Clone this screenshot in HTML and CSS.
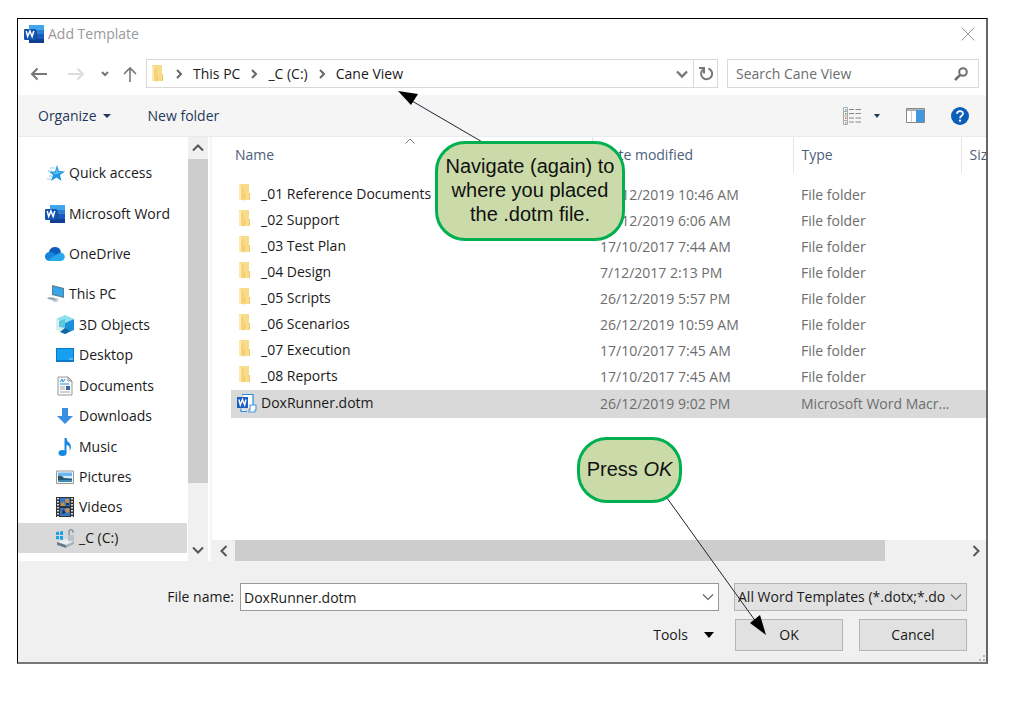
FILE: index.html
```
<!DOCTYPE html>
<html lang="en">
<head>
<meta charset="utf-8">
<title>Add Template</title>
<link rel="stylesheet" href="styles.css">
</head>
<body>
<svg class="sprite" aria-hidden="true">
  <symbol id="word" viewBox="0 0 20 20">
    <path fill="#41a5ee" d="M5 1h15v5H5z"/><path fill="#2b7cd3" d="M5 6h15v4H5z"/><path fill="#185abd" d="M5 10h15v5H5z"/><path fill="#103f91" d="M5 15h15v4H5z"/>
    <path fill="#0b2f73" d="M4 6h9v10H4z" opacity=".5"/><rect y="5" width="12" height="11" rx="1" fill="#1453b0"/>
    <path d="M2.200 7l1.500 5.500 2.200-5.500 2.200 5.500 1.700-5.500" fill="none" stroke="#fff" stroke-width="1.500"/>
  </symbol>
  <symbol id="folder" viewBox="0 0 12 18">
    <path fill="#f9dc8b" d="M1 0h10v16H1z"/><path fill="#fdebb0" d="M1 1h2v15H1z"/><path fill="#f2c75f" d="M11 9h1v7h-1z"/><path fill="#f6d27a" d="M3 2l3 2v13l-3-2z"/><path fill="#f0c664" d="M6 10h1v4l-1 2z"/>
  </symbol>
  <symbol id="right" viewBox="0 0 10 10"><path d="M3 1l4 4-4 4" fill="none" stroke="currentColor" stroke-width="2"/></symbol>
  <symbol id="down" viewBox="0 0 12 12"><path d="M1 3.500l5 5 5-5" fill="none" stroke="currentColor" stroke-width="2"/></symbol>
  <symbol id="thin-down" viewBox="0 0 12 12"><path d="M1 3.500l5 5 5-5" fill="none" stroke="currentColor" stroke-width="1.200"/></symbol>
  <symbol id="up" viewBox="0 0 12 12"><path d="M1 8.500l5-5 5 5" fill="none" stroke="currentColor" stroke-width="2"/></symbol>
</svg>

<main class="dialog">
  <header class="titlebar">
    <svg class="icon20"><use href="#word"/></svg>
    <h1>Add Template</h1>
    <button class="close" aria-label="Close"><svg width="14" height="14" viewBox="0 0 14 14"><path d="M.5.500l13 13M13.500.500l-13 13" stroke="#999" fill="none"/></svg></button>
  </header>

  <nav class="navbar">
    <div class="history">
      <button aria-label="Back"><svg width="18" height="14" viewBox="0 0 18 14"><path d="M17 7H2M7.500 1.500L2 7l5.500 5.500" fill="none" stroke="#777" stroke-width="2"/></svg></button>
      <button aria-label="Forward"><svg width="18" height="14" viewBox="0 0 18 14"><path d="M1 7h15M10.500 1.500L16 7l-5.500 5.500" fill="none" stroke="#ddd" stroke-width="2"/></svg></button>
      <button aria-label="Recent locations"><svg class="chev8" viewBox="0 0 8 8"><path d="M1 2l3 3 3-3" fill="none" stroke="#777" stroke-width="2"/></svg></button>
      <button aria-label="Up"><svg width="14" height="16" viewBox="0 0 14 16"><path d="M7 16V2M1 8l6-6 6 6" fill="none" stroke="#777" stroke-width="1.600"/></svg></button>
    </div>
    <div class="address">
      <svg class="folder"><use href="#folder"/></svg>
      <svg class="sep"><use href="#right"/></svg>
      <button>This PC</button>
      <svg class="sep"><use href="#right"/></svg>
      <button>_C (C:)</button>
      <svg class="sep"><use href="#right"/></svg>
      <button>Cane View</button>
      <button class="drop" aria-label="Previous locations"><svg width="12" height="12" viewBox="0 0 12 12"><path d="M1 3.500l5 5 5-5" fill="none" stroke="#777" stroke-width="2.400"/></svg></button>
      <button class="refresh" aria-label="Refresh"><svg width="14" height="15" viewBox="0 0 14 15"><path d="M9.500 2.500a5.500 5.500 0 1 1-5.500 1" fill="none" stroke="#777" stroke-width="2"/><path d="M0 2h5v5.500" fill="none" stroke="#777" stroke-width="2"/></svg></button>
    </div>
    <div class="search">
      <input type="search" placeholder="Search Cane View" aria-label="Search Cane View">
      <svg width="14" height="14" viewBox="0 0 14 14"><circle cx="9" cy="5" r="3.800" fill="none" stroke="#707070" stroke-width="2"/><path d="M6.200 7.800L1 13" stroke="#707070" stroke-width="2.600"/></svg>
    </div>
  </nav>

  <div class="toolbar">
    <button>Organize <svg width="8" height="4" viewBox="0 0 8 4"><path d="M0 0h8L4 4z" fill="#1e395b"/></svg></button>
    <button>New folder</button>
    <div class="views">
      <button class="view-mode" aria-label="Change your view">
        <svg width="18" height="18" viewBox="0 0 18 18"><path d="M.5.500h4v17h-4zM.5 4.500h4M.5 9h4M.5 13.500h4" fill="#fff" stroke="#aaa"/><path d="M6 2.500h5M12.500 2.500H18M6 6.500h5M12.500 6.500H18M6 11h5M12.500 11H18M6 15h5M12.500 15H18" stroke="#888"/><path fill="#4b9fdb" d="M2 2h1.500v1.500H2z"/><path fill="#5a8a5a" d="M2 6h1.500v1.500H2z"/><path fill="#e06a2a" d="M2 10.500h1.500V12H2z"/><path fill="#8a8a9a" d="M2 15h1.500v1.500H2z"/></svg>
        <svg width="6" height="4" viewBox="0 0 6 4"><path d="M0 0h6L3 4z" fill="#1e395b"/></svg>
      </button>
      <button aria-label="Preview pane"><svg width="19" height="15" viewBox="0 0 19 15"><path d="M.5.500h18v14H.5z" fill="#fff" stroke="#888"/><path d="M1 1h17v2H1z" fill="#aab4bc"/><path d="M5.500 3v11" stroke="#ccc"/><path d="M10 2h8v12h-8z" fill="#3f97e0"/></svg></button>
      <button aria-label="Help"><svg width="18" height="18" viewBox="0 0 18 18"><circle cx="9" cy="9" r="9" fill="#0c5fb8"/><path d="M6 6.800C6 3.300 12 3.200 12 6.600 12 8.800 9 8.700 9 11.200" fill="none" stroke="#fff" stroke-width="1.700"/><circle cx="9" cy="13.700" r="1.100" fill="#fff"/></svg></button>
    </div>
  </div>

  <div class="browser">
    <ul class="places">
      <li class="root"><svg viewBox="0 0 20 20"><path fill="#2196e3" d="M12 2l2 6 6 .5-5 3.500 1.500 6-5-3.500L6 18l2-6-4-3.500h6z"/><path fill="#5cc0f5" d="M12 4l1 5 4 .5-7 2-3-2h4z"/><path d="M5 5h5M3 8h4M4 13h3M2 16h4" stroke="#8ccdf2"/></svg>Quick access</li>
      <li class="root"><svg><use href="#word"/></svg>Microsoft Word</li>
      <li class="root"><svg viewBox="0 0 20 20"><path fill="#0f5db8" d="M4 9a6 5.500 0 0 1 12-1l-3 5z"/><path fill="#1684dc" d="M4 17a4.500 4.500 0 0 1 1-9q3-.5 5 2l5 6z"/><path fill="#28a8ea" d="M3 16.500q3-3.500 8-5.500l4-2.500a4.200 4.200 0 0 1 1 8.500H4z"/></svg>OneDrive</li>
      <li><svg viewBox="0 0 20 20"><path fill="#5b7f97" d="M7 1l12 3v10L7 11z"/><path fill="#37a5e8" d="M8 2.500l10 2.500v7.500L8 10z"/><path fill="#b9c5cc" d="M1 14l6-1 7 2-5 2zM8 17l4-1 2 1-4 1z"/><path d="M3 14l7 1.500" stroke="#7e8e98"/></svg>This PC</li>
      <li class="sub"><svg viewBox="0 0 20 20"><path fill="#8fe0ef" d="M1 4l9-4 9 4-9 4z"/><path fill="#d5f1ee" d="M1 4l9 4v11l-9-4z"/><path fill="#1d8ed8" d="M10 8l9-4v11l-9 4z"/><path fill="#5dc6df" d="M4 6l6-2v9l-6-1z"/><path fill="#13669f" d="M10 13l5 3-5 3-5-2z"/></svg>3D Objects</li>
      <li class="sub"><svg viewBox="0 0 20 20"><path fill="#0b78c9" d="M1 3h18v14H1z"/><path fill="#18a0f0" d="M2 4h16v11H2z"/><path fill="#58b9ee" d="M14 13h4v2h-4z"/></svg>Desktop</li>
      <li class="sub"><svg viewBox="0 0 20 20"><path fill="#fafafa" stroke="#999" d="M3 1h10l4 4v14H3z"/><path fill="#ccc" stroke="#999" d="M13 1v4h4z"/><path d="M5 6l2-3 1 3 2-3M5 8h9" stroke="#2492dc" fill="none"/><path d="M5 11h5M5 13h5M5 16h10" stroke="#aaa"/><path fill="#346d9d" d="M11 10h4v4h-4z"/></svg>Documents</li>
      <li class="sub"><svg viewBox="0 0 20 20"><path fill="#3b8de0" d="M7 2h6v8h5l-8 8-8-8h5z"/></svg>Downloads</li>
      <li class="sub"><svg viewBox="0 0 20 20"><ellipse cx="7.500" cy="16" rx="4" ry="3" fill="#1689e0"/><path fill="#1689e0" d="M9.500 1h2q0 3 3 5 3 4 0 8 1-6-3-6v8h-2z"/></svg>Music</li>
      <li class="sub"><svg viewBox="0 0 20 20"><path fill="#f6f6f6" stroke="#999" d="M1.500 4h17v12.500h-17z"/><path fill="#6bb7ed" d="M3 5.500h14v9.500H3z"/><path fill="#d6ecf7" d="M3 9h14v2H3z"/><path fill="#28586b" d="M3 9q4-1 6 2l8 1v1H3z"/><path fill="#4489b3" d="M3 13h14v2H3z"/></svg>Pictures</li>
      <li class="sub"><svg viewBox="0 0 20 20"><path fill="#333" d="M1 0h18v20H1z"/><path fill="#3378c8" d="M5 1h10v18H5z"/><path d="M3 1v19M17 1v19" stroke="#ddd" stroke-width="2" stroke-dasharray="1.500 1.500"/><path fill="#d48a3c" d="M10 2h4v4l-3 1zM6 6l3-1 1 4-4 1zM10 12l4-1v4l-3 1z"/><path fill="#27313f" d="M5 9h10v2H5zM8 12l3 4-4 1zM11 6h3v2h-3z"/></svg>Videos</li>
      <li class="sub selected"><svg viewBox="0 0 20 20"><path fill="#1ba1e8" d="M1 4l3-.5v3.500H1zM5 3.500L8 3v4H5zM1 8h3v3.500L1 11zM5 8h3v4l-3-.5z"/><path fill="#e8eef2" d="M2 14l9-3 8 2-8 4z"/><path fill="#6d7a83" d="M2 14l9 3v3l-9-3z"/><path fill="#a8b4bc" d="M11 17l8-4v3l-8 4z"/><path fill="#b9c2c8" d="M13 7h6v6h-6z"/><path d="M14 7V3q2-3 4 0v2" fill="none" stroke="#8c979e" stroke-width="1.500"/></svg>_C (C:)</li>
    </ul>
    <div class="vscroll">
      <button aria-label="Scroll up"><svg class="chev12"><use href="#up"/></svg></button>
      <div class="vthumb"></div>
      <button aria-label="Scroll down"><svg class="chev12"><use href="#down"/></svg></button>
    </div>
    <section class="files">
      <table>
        <colgroup><col><col class="c-date"><col class="c-type"><col class="c-size"></colgroup>
        <thead><tr><th>Name<svg class="sort" viewBox="0 0 10 6"><path d="M.5 5.500L5 1l4.500 4.500" fill="none" stroke="#777"/></svg></th><th>Date modified</th><th>Type</th><th>Size</th></tr></thead>
        <tbody>
          <tr><td><svg class="folder"><use href="#folder"/></svg>_01 Reference Documents</td><td>26/12/2019 10:46 AM</td><td>File folder</td><td></td></tr>
          <tr><td><svg class="folder"><use href="#folder"/></svg>_02 Support</td><td>26/12/2019 6:06 AM</td><td>File folder</td><td></td></tr>
          <tr><td><svg class="folder"><use href="#folder"/></svg>_03 Test Plan</td><td>17/10/2017 7:44 AM</td><td>File folder</td><td></td></tr>
          <tr><td><svg class="folder"><use href="#folder"/></svg>_04 Design</td><td>7/12/2017 2:13 PM</td><td>File folder</td><td></td></tr>
          <tr><td><svg class="folder"><use href="#folder"/></svg>_05 Scripts</td><td>26/12/2019 5:57 PM</td><td>File folder</td><td></td></tr>
          <tr><td><svg class="folder"><use href="#folder"/></svg>_06 Scenarios</td><td>26/12/2019 10:59 AM</td><td>File folder</td><td></td></tr>
          <tr><td><svg class="folder"><use href="#folder"/></svg>_07 Execution</td><td>17/10/2017 7:45 AM</td><td>File folder</td><td></td></tr>
          <tr><td><svg class="folder"><use href="#folder"/></svg>_08 Reports</td><td>17/10/2017 7:45 AM</td><td>File folder</td><td></td></tr>
          <tr class="selected"><td><svg class="dotm" viewBox="0 0 20 20"><path d="M5 1.500h11v12M4 15.500v3h6" fill="#fff" stroke="#2b8be0" stroke-width="1.200"/><path d="M8 4h7v11H8z" fill="#fff"/><rect x="0" y="4" width="11" height="11" fill="#1d5fc2"/><path d="M2 6.500l1.300 5.500 2.200-5.500 2.200 5.500 1.300-5.500" fill="none" stroke="#fff" stroke-width="1.400"/><path d="M13 12h6v5h-1v2h-6v-2h1z" fill="#fff" stroke="#4aa0e6" stroke-width="1.200"/></svg>DoxRunner.dotm</td><td>26/12/2019 9:02 PM</td><td>Microsoft Word Macr...</td><td></td></tr>
        </tbody>
      </table>
      <div class="hscroll">
        <button aria-label="Scroll left"><svg class="chev12 left"><use href="#down"/></svg></button>
        <div class="hthumb"></div>
        <button aria-label="Scroll right"><svg class="chev12 right"><use href="#down"/></svg></button>
      </div>
    </section>
  </div>

  <footer class="footer">
    <div class="row">
      <label for="fname">File name:</label>
      <div class="combo"><input id="fname" type="text" value="DoxRunner.dotm"><svg class="chev12"><use href="#thin-down"/></svg></div>
      <div class="filter"><select aria-label="File type"><option>All Word Templates (*.dotx;*.do</option></select><svg class="chev12"><use href="#thin-down"/></svg></div>
    </div>
    <div class="row actions">
      <button class="tools">Tools <svg width="10" height="6" viewBox="0 0 10 6"><path d="M0 0h10L5 6z"/></svg></button>
      <button class="push">OK</button>
      <button class="push">Cancel</button>
    </div>
    <svg class="grip" viewBox="0 0 7 7"><path fill="#b5b5b5" d="M4 0h2v2H4zM0 4h2v2H0zM4 4h2v2H4z"/></svg>
  </footer>

  <svg class="arrow arrow-nav" viewBox="0 0 90 60"><path d="M86 53L14 11" stroke="#223" fill="none"/><path d="M0 1l20 3-7 11z"/></svg>
  <p class="callout callout-nav"><span>Navigate (again) to<br>where you placed<br>the .dotm file.</span></p>
  <svg class="arrow arrow-ok" viewBox="0 0 104 144"><path d="M2 2l92 128" stroke="#223" fill="none"/><path d="M101 139L85 127l10-8z"/></svg>
  <p class="callout callout-ok"><span>Press <em>OK</em></span></p>
</main>
</body>
</html>
```

FILE: styles.css
```
* { box-sizing: border-box; }
body {
  margin: 0;
  min-height: 100vh;
  padding: 18px 21px 40px 17px;
  display: flex;
  flex-direction: column;
  background: #fff;
  color: #1a1a1a;
  font: 14px/20px "Open Sans", "Noto Sans", sans-serif;
}
button, input, select { font: inherit; color: inherit; border: 0; background: none; padding: 0; margin: 0; outline: 0; }
button { display: flex; align-items: center; justify-content: center; }
svg { flex: none; display: block; }
.sprite { position: absolute; width: 0; height: 0; }
.icon20 { width: 20px; height: 20px; }
.folder { width: 12px; height: 18px; }
.sep { width: 10px; height: 10px; color: #666; }
.chev8 { width: 8px; height: 8px; }
.chev12 { width: 12px; height: 12px; color: #555; }
.left { transform: rotate(90deg); }
.right { transform: rotate(-90deg); }

.dialog {
  position: relative;
  flex: 1;
  display: flex;
  flex-direction: column;
  border: 1px solid #000;
  border-right: 2px solid #666;
  border-bottom: 2px solid #777;
}
.titlebar { display: flex; align-items: center; gap: 4px; height: 30px; padding: 0 11px 0 6px; color: #999; }
.titlebar h1 { margin: 0; font-size: 14px; font-weight: 400; }
.close { margin-left: auto; }

.navbar { display: flex; height: 46px; padding: 10px 7px 7px 12px; }
.history { display: flex; gap: 19px; width: 116px; }
.history button:nth-child(3) { margin: 0 -5px 0 -3px; }
.address { flex: 1; display: flex; align-items: center; gap: 9px; border: 1px solid #d9d9d9; padding-left: 4px; }
.address .drop { margin-left: auto; }
.refresh { align-self: stretch; width: 24px; margin-left: -4px; border-left: 1px solid #d9d9d9; }
.address .folder { margin-right: 2px; }
.search { display: flex; align-items: center; width: 252px; margin-left: 9px; border: 1px solid #d9d9d9; padding: 0 10px 0 8px; }
.search input { flex: 1; min-width: 0; }
.search input::placeholder { color: #6d6d6d; opacity: 1; }

.toolbar { display: flex; align-items: center; gap: 37px; height: 42px; padding: 0 17px 0 20px; background: #f5f5f5; border-bottom: 1px solid #e8ecec; color: #1e395b; }
.toolbar > button { gap: 6px; }
.views { display: flex; align-items: center; gap: 26px; margin-left: auto; }
.view-mode { gap: 13px; }

.browser { flex: 1; display: flex; min-height: 0; }
.places { display: flex; flex-direction: column; width: 169px; margin: 0; padding: 21px 0 8px; list-style: none; }
.places li { flex: 1; display: flex; align-items: center; gap: 4px; padding-left: 27px; }
.places .sub { padding-left: 37px; }
.places .root { margin-bottom: 10px; }
.places svg { width: 20px; height: 20px; }
.places .selected { background: #d9d9d9; }
.vscroll { display: flex; flex-direction: column; width: 20px; margin-left: 1px; background: #f0f0f0; }
.vscroll button { height: 22px; }
.vthumb { height: 324px; background: #cdcdcd; margin-bottom: auto; }

.files { flex: 1; min-width: 0; display: flex; flex-direction: column; margin-left: 2px; border-left: 2px solid #f5f5f5; }
table { width: calc(100% - 19px); margin: 0 0 0 19px; table-layout: fixed; border-collapse: collapse; }
.c-date { width: 201px; }
.c-type { width: 168px; }
.c-size { width: 25px; }
th, td { padding: 0 0 0 8px; white-space: nowrap; text-align: left; font-weight: 400; overflow: hidden; color: #6d6d6d; }
th { position: relative; height: 36px; color: #4c607a; border-right: 1px solid #e5e5e5; }
th:first-child { padding-left: 4px; }
th:last-child { border-right: 0; }
.sort { position: absolute; top: 1px; left: 50%; width: 10px; height: 6px; margin-left: -6px; }
tbody::before { content: ""; display: block; height: 9px; }
tbody tr { height: 26px; }
tbody .selected { height: 28px; background: #d9d9d9; }
td:first-child { color: #1a1a1a; }
td svg { display: inline-block; vertical-align: middle; margin-right: 10px; }
td .folder { margin: 0 11px 4px -1px; }
td .dotm { width: 20px; height: 20px; margin: 0 4px 2px -2px; }
.hscroll { display: flex; height: 21px; margin-top: auto; background: #f0f0f0; }
.hscroll button { width: 20px; }
.hthumb { flex: none; width: 84%; margin-right: auto; background: #cdcdcd; }
.hscroll button:first-child { width: 23px; }

.footer { position: relative; display: flex; flex-direction: column; gap: 8px; padding: 22px 19px 11px 20px; background: #f0f0f0; }
.row { display: flex; align-items: center; }
.row label { width: 202px; padding-right: 6px; text-align: right; }
.combo { position: relative; flex: 1; }
.combo input { width: 100%; height: 28px; padding: 0 28px 0 3px; border: 1px solid #999; background: #fff; }
.filter { position: relative; width: 233px; margin-left: 15px; }
.filter select { width: 100%; height: 28px; padding: 0 18px 0 3px; appearance: none; border: 1px solid #b5b5b5; background: #e1e1e1; text-overflow: clip; }
.combo svg, .filter svg { position: absolute; right: 5px; top: 8px; color: #666; }
.actions { justify-content: flex-end; gap: 16px; }
.tools { gap: 16px; margin-right: 5px; }
.push { width: 108px; height: 32px; border: 1px solid #b5b5b5; background: #e1e1e1; }
.grip { position: absolute; right: 0; bottom: 0; width: 7px; height: 7px; }

.callout {
  position: absolute;
  display: flex;
  align-items: center;
  justify-content: center;
  margin: 0;
  padding-bottom: 2px;
  border: 3px solid #00b050;
  border-radius: 30px;
  background: #cbdaa9;
  color: #111;
  font: 20px/24px "Liberation Sans", Arial, sans-serif;
  text-align: center;
  white-space: nowrap;
}
.callout-nav { left: 417px; top: 122px; width: 190px; height: 100px; }
.callout-ok { left: 559px; top: 418px; width: 105px; height: 66px; }
.arrow { position: absolute; pointer-events: none; }
.arrow-nav { left: 380px; top: 71px; width: 90px; height: 60px; }
.arrow-ok { left: 647px; top: 477px; width: 104px; height: 144px; }
```
